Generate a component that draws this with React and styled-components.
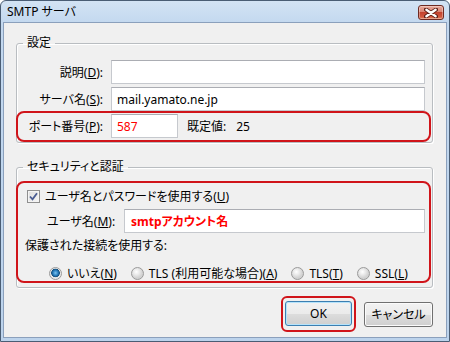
import React from "react";
import styled, { createGlobalStyle } from "styled-components";

const GlobalStyle = createGlobalStyle`
  html, body { margin: 0; padding: 0; background: #ffffff; }
  body {
    font-family: "Noto Sans", "Noto Sans CJK JP", sans-serif;
    font-size: 12px;
    color: #000;
    font-feature-settings: "palt";
  }
  * { box-sizing: border-box; }
`;

const Window = styled.div`
  width: 450px;
  height: 342px;
  border: 1px solid #4a5d74;
  border-radius: 6px 6px 0 0;
  background: linear-gradient(180deg, #d3e3f4 0px, #c3d8ef 22px, #bcd3ec 100%);
  padding: 0 2px 3px 2px;
  display: flex;
  flex-direction: column;
`;

const TitleBar = styled.div`
  height: 21px;
  display: flex;
  align-items: flex-start;
  justify-content: space-between;
  padding: 0 3px 0 4px;
`;

const Title = styled.span`
  line-height: 21px;
  font-size: 12px;
  color: #000;
`;

const CloseButton = styled.div`
  margin-top: 4px;
  width: 26px;
  height: 15px;
  border: 1px solid #6e2a22;
  border-radius: 3px;
  background: linear-gradient(180deg, #e9a99b 0%, #d98574 45%, #c4432f 50%, #d0563d 80%, #e07e5a 100%);
  display: flex;
  align-items: center;
  justify-content: center;
  box-shadow: inset 0 0 0 1px rgba(255, 255, 255, 0.35);
`;

const Panel = styled.div`
  flex: 1;
  border: 1px solid #8ba0bc;
  background: #f0f0f0;
  padding: 12px 13px 5px 12px;
  display: flex;
  flex-direction: column;
`;

const GroupBox = styled.fieldset`
  margin: 0;
  min-width: 0;
  border: 1px solid #b9bdc1;
  border-radius: 3px;
  box-shadow: inset 1px 1px 0 #ffffff, 1px 1px 0 #ffffff;
  padding: ${(p) => p.$pad};
  margin-bottom: ${(p) => p.$mb || 0}px;
`;

const Legend = styled.legend`
  padding: 0 4px;
  margin-left: -2px;
  line-height: 16px;
  font-size: 12px;
`;

const FieldGrid = styled.div`
  display: grid;
  grid-template-columns: 78px 1fr;
  column-gap: 8px;
  row-gap: 3px;
  align-items: center;
`;

const Label = styled.label`
  text-align: ${(p) => (p.$left ? "left" : "right")};
  white-space: nowrap;
  width: ${(p) => (p.$w ? `${p.$w}px` : "auto")};
  flex: none;
`;

const Key = styled.span`
  text-decoration: underline;
`;

const TextBox = styled.input`
  height: 24px;
  width: ${(p) => (p.$w ? `${p.$w}px` : "100%")};
  flex: ${(p) => (p.$w ? "none" : "1")};
  min-width: 0;
  margin: 0;
  border: 1px solid #c6c9ce;
  border-top-color: #abadb3;
  background: #ffffff;
  font: inherit;
  font-size: 12px;
  color: ${(p) => p.$color || "#000"};
  font-weight: ${(p) => (p.$bold ? 700 : 400)};
  padding: 0 ${(p) => p.$padX || 5}px;
  outline: none;
`;

const Highlight = styled.div`
  border: 2px solid #d0141a;
  border-radius: ${(p) => p.$radius || 8}px;
  margin: ${(p) => p.$margin || 0};
  padding: ${(p) => p.$pad || 0};
`;

const PortRow = styled.div`
  display: flex;
  align-items: center;
`;

const PortLabel = styled(Label)`
  width: 78px;
  margin-right: 8px;
`;

const DefaultLabel = styled.span`
  margin-left: 9px;
  white-space: nowrap;
`;

const DefaultValue = styled.span`
  margin-left: 10px;
`;

const CheckRow = styled.div`
  display: flex;
  align-items: center;
  height: 16px;
  gap: 5px;
  padding-left: 2px;
`;

const CheckBox = styled.span`
  width: 13px;
  height: 13px;
  flex: none;
  border: 1px solid #8f8f8f;
  background: linear-gradient(135deg, #dcdcdc 0%, #f7f7f7 100%);
  box-shadow: inset 0 0 0 1px #f4f4f4;
  display: flex;
  align-items: center;
  justify-content: center;
`;

const UserRow = styled.div`
  display: flex;
  align-items: center;
  margin-top: 5px;
  padding-left: 22px;
`;

const Caption = styled.div`
  margin-top: 5px;
  line-height: 16px;
`;

const RadioRow = styled.div`
  display: flex;
  align-items: center;
  margin-top: 11px;
  height: 16px;
  padding-left: 24px;
  gap: 14px;
`;

const RadioItem = styled.label`
  display: flex;
  align-items: center;
  gap: 5px;
  white-space: nowrap;
`;

const Radio = styled.span`
  width: 13px;
  height: 13px;
  flex: none;
  border-radius: 50%;
  border: 1px solid #9a9a9a;
  background: ${(p) =>
    p.$checked
      ? "radial-gradient(circle at 50% 45%, #7cc4f0 0, #2a7fc0 2.5px, #14507e 4px, #e6e6e6 4.6px, #f4f4f4 100%)"
      : "radial-gradient(circle at 40% 35%, #ffffff 0, #eaeaea 3px, #d2d2d2 6px)"};
`;

const ButtonRow = styled.div`
  margin-top: 8px;
  display: flex;
  justify-content: flex-end;
  align-items: center;
  gap: 8px;
`;

const Button = styled.button`
  width: ${(p) => p.$w}px;
  height: 25px;
  margin: 0;
  padding: 0;
  font: inherit;
  font-size: 12px;
  color: #000;
  border-radius: 3px;
  border: 1px solid ${(p) => (p.$default ? "#3c7fb1" : "#707070")};
  background: linear-gradient(180deg, #f2f2f2 0%, #ebebeb 50%, #dddddd 51%, #cfcfcf 100%);
  box-shadow: inset 0 0 0 1px ${(p) => (p.$default ? "#b6e3fb" : "#fbfbfb")};
  display: flex;
  align-items: center;
  justify-content: center;
`;

function CloseGlyph() {
  return (
    <svg width="14" height="10" viewBox="0 0 14 10">
      <path d="M2 1.5 L12 8.5 M12 1.5 L2 8.5" stroke="#5b1e16" strokeWidth="4" strokeLinecap="round" />
      <path d="M2.4 1.8 L11.6 8.2 M11.6 1.8 L2.4 8.2" stroke="#ffffff" strokeWidth="2.4" strokeLinecap="round" />
    </svg>
  );
}

function CheckGlyph() {
  return (
    <svg width="9" height="9" viewBox="0 0 9 9">
      <path d="M1 4.5 L3.5 7.3 L8 1.2" fill="none" stroke="#4a5c92" strokeWidth="1.8" />
    </svg>
  );
}

export default function App() {
  return (
    <>
      <GlobalStyle />
      <Window>
        <TitleBar>
          <Title>SMTP サーバ</Title>
          <CloseButton>
            <CloseGlyph />
          </CloseButton>
        </TitleBar>
        <Panel>
          <GroupBox $pad="9px 7px 0 8px" $mb={16}>
            <Legend>設定</Legend>
            <FieldGrid>
              <Label>
                説明(<Key>D</Key>):
              </Label>
              <TextBox readOnly value="" />
              <Label>
                サーバ名(<Key>S</Key>):
              </Label>
              <TextBox readOnly value="mail.yamato.ne.jp" />
            </FieldGrid>
            <Highlight $margin="0 -6px 0 -9px" $pad="1px 0 2px 7px">
              <PortRow>
                <PortLabel>
                  ポート番号(<Key>P</Key>):
                </PortLabel>
                <TextBox readOnly value="587" $w={67} $color="#ff0000" />
                <DefaultLabel>既定値:</DefaultLabel>
                <DefaultValue>25</DefaultValue>
              </PortRow>
            </Highlight>
          </GroupBox>
          <GroupBox $pad="6px 7px 4px 8px">
            <Legend>セキュリティと認証</Legend>
            <Highlight $margin="0 -6px 0 -9px" $pad="5px 4px 0 7px">
              <CheckRow>
                <CheckBox>
                  <CheckGlyph />
                </CheckBox>
                <span>
                  ユーザ名とパスワードを使用する(<Key>U</Key>)
                </span>
              </CheckRow>
              <UserRow>
                <Label $left $w={77}>
                  ユーザ名(<Key>M</Key>):
                </Label>
                <TextBox readOnly value="smtpアカウント名" $color="#ff0000" $bold $padX={6} />
              </UserRow>
              <Caption>保護された接続を使用する:</Caption>
              <RadioRow>
                <RadioItem>
                  <Radio $checked />
                  <span>
                    いいえ(<Key>N</Key>)
                  </span>
                </RadioItem>
                <RadioItem>
                  <Radio />
                  <span>
                    TLS (利用可能な場合)(<Key>A</Key>)
                  </span>
                </RadioItem>
                <RadioItem>
                  <Radio />
                  <span>
                    TLS(<Key>T</Key>)
                  </span>
                </RadioItem>
                <RadioItem>
                  <Radio />
                  <span>
                    SSL(<Key>L</Key>)
                  </span>
                </RadioItem>
              </RadioRow>
            </Highlight>
          </GroupBox>
          <ButtonRow>
            <Highlight $radius={6} $pad="3px 2px 4px 2px">
              <Button $w={67} $default>
                OK
              </Button>
            </Highlight>
            <Button $w={69}>キャンセル</Button>
          </ButtonRow>
        </Panel>
      </Window>
    </>
  );
}
